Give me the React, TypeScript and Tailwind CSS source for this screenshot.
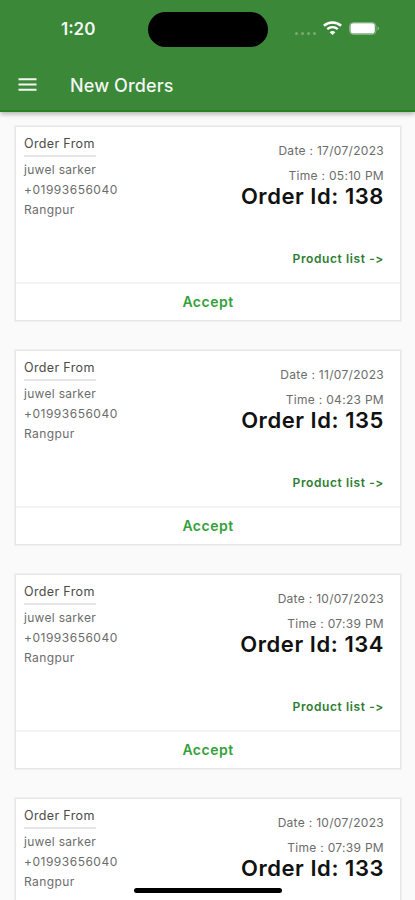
type Order = {
  id: number;
  date: string;
  time: string;
};

const orders: Order[] = [
  { id: 138, date: "17/07/2023", time: "05:10 PM" },
  { id: 135, date: "11/07/2023", time: "04:23 PM" },
  { id: 134, date: "10/07/2023", time: "07:39 PM" },
  { id: 133, date: "10/07/2023", time: "07:39 PM" },
];

function StatusBar() {
  return (
    <div className="flex h-[58px] items-center text-white">
      <div className="w-[148px] pl-[61px] text-[17px] font-semibold leading-none text-white/95">1:20</div>
      <div className="h-[35px] w-[120px] rounded-full bg-black" />
      <div className="ml-[27px] mt-2 flex gap-[3px]">
        <span className="size-[3px] rounded-full bg-white/30" />
        <span className="size-[3px] rounded-full bg-white/30" />
        <span className="size-[3px] rounded-full bg-white/30" />
        <span className="size-[3px] rounded-full bg-white/30" />
      </div>
      <svg className="-mt-px ml-[7px] h-[15px] w-[19px]" viewBox="0 0 19 15" fill="none" stroke="currentColor">
        <path d="M.9 4.8C5.7 .4 13.3 .4 18.1 4.8" strokeWidth="2.7" />
        <path d="M4.2 8.2c3-2.7 7.6-2.7 10.6 0" strokeWidth="2.3" />
        <path d="M9.5 14 6.7 11.2c1.5-1.6 4.1-1.6 5.6 0z" fill="currentColor" stroke="none" />
      </svg>
      <svg className="-mt-px ml-[7px] h-[13px] w-[31px]" viewBox="0 0 31 13">
        <rect x=".5" y=".5" width="26.5" height="12" rx="3.8" fill="none" stroke="white" strokeOpacity=".35" />
        <rect x="1.5" y="1.3" width="24.3" height="10.2" rx="2.8" fill="white" />
        <path d="M28.5 4.5c2 .7 2 3.3 0 4z" fill="white" fillOpacity=".4" />
      </svg>
    </div>
  );
}

function OrderCard({ order }: { order: Order }) {
  return (
    <div className="flex h-[195px] shrink-0 flex-col border border-[#e6e6e6] bg-white shadow-[0_0_1px_1px_#f0f0f0]">
      <div className="flex h-[155px] justify-between pl-2 pr-4 text-[12px] text-[#6c6c6c]">
        <div className="pt-2 tracking-[0.35px]">
          <div className="w-[72px] whitespace-nowrap border-b-2 border-[#e6e6e6] pb-[2px] text-[12.5px] leading-[18px] text-[#4a4a4a]">
            Order From
          </div>
          <div className="pt-[3px] leading-[20px]">
            <p className="tracking-[0.3px]">juwel sarker</p>
            <p className="tracking-[0.5px]">+01993656040</p>
            <p className="tracking-[0.4px]">Rangpur</p>
          </div>
        </div>
        <div className="flex flex-col items-end pt-[11px]">
          <p className="leading-[25px] tracking-[0.3px]">Date : {order.date}</p>
          <p className="leading-[25px] tracking-[0.3px]">Time : {order.time}</p>
          <h2 className="-mt-[5px] text-[22px] font-semibold leading-[26px] tracking-[0.55px] text-[#111]">Order Id: {order.id}</h2>
          <button className="mt-10 text-[12px] font-semibold leading-[20px] tracking-[0.6px] text-[#2e7d32]">
            Product list -&gt;
          </button>
        </div>
      </div>
      <button className="flex-1 border-t-2 border-[#f3f3f3] pb-[2px] text-[14px] font-semibold tracking-[0.5px] text-[#34a03a]">
        Accept
      </button>
    </div>
  );
}

export default function App() {
  return (
    <div className="relative flex h-[900px] w-[415px] flex-col overflow-hidden bg-[#fafafa] font-['Inter',sans-serif]">
      <header className="z-10 h-[112px] shrink-0 border-b-2 border-[#24821f] bg-[#3c8839] shadow-[0_2px_5px_rgba(0,0,0,0.3)]">
        <StatusBar />
        <div className="flex h-[53px] items-center text-white/95">
          <svg className="ml-[18px] h-[13px] w-[19px]" viewBox="0 0 19 13" fill="currentColor">
            <path d="M.5 .2h18v2H.5zM.5 5.5h18v2H.5zM.5 10.8h18v2H.5z" />
          </svg>
          <h1 className="ml-[33px] mt-px text-[18px] font-medium tracking-[0.12px]">New Orders</h1>
        </div>
      </header>
      <main className="flex flex-col gap-[29px] pl-[15px] pr-[14px] pt-[14px]">
        {orders.map((order) => (
          <OrderCard key={order.id} order={order} />
        ))}
      </main>
      <div className="absolute bottom-[7px] left-[134px] h-[5px] w-[148px] rounded-full bg-black" />
    </div>
  );
}
